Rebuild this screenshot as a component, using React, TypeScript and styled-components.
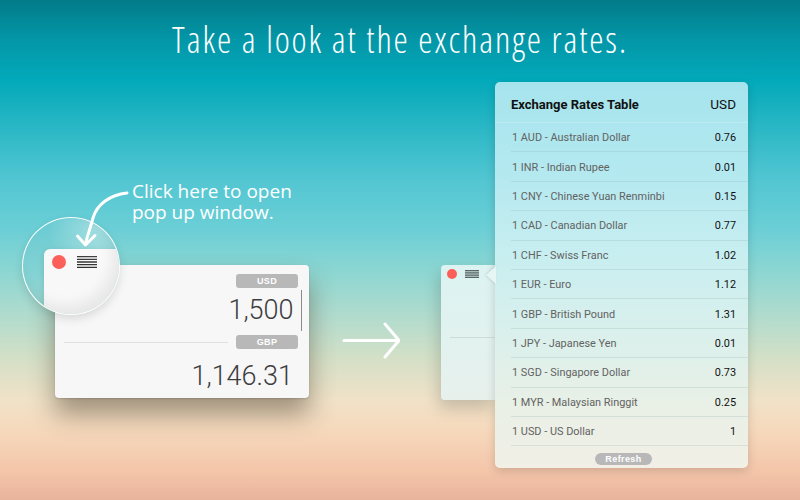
import React from "react";
import styled, { createGlobalStyle } from "styled-components";

const Global = createGlobalStyle`
  html, body { margin: 0; padding: 0; }
  body { width: 800px; height: 500px; overflow: hidden; font-family: Roboto, "Liberation Sans", sans-serif; }
  * { box-sizing: border-box; }
`;

const Page = styled.div`
  width: 800px;
  height: 500px;
  overflow: hidden;
  background: linear-gradient(
    180deg,
    #027b89 0px,
    #0397a8 40px,
    #02a9ba 80px,
    #2cb8c6 130px,
    #52c6d2 180px,
    #6ccfd6 230px,
    #8bd6d2 270px,
    #b4dccd 320px,
    #d5e0c6 360px,
    #f0e2c8 400px,
    #f6d9bc 430px,
    #f4c6aa 470px,
    #e9b49c 500px
  );
  display: flex;
  flex-direction: column;
`;

const Title = styled.h1`
  margin: 0;
  height: 82px;
  display: flex;
  align-items: center;
  justify-content: center;
  padding-bottom: 4px;
  font-family: "Open Sans", sans-serif;
  font-stretch: 75%;
  font-weight: 300;
  font-size: 36px;
  color: #ffffff;
  letter-spacing: 1.9px;
`;

const Stage = styled.div`
  display: flex;
  align-items: flex-start;
  height: 418px;
`;

const LeftArea = styled.div`
  position: relative;
  width: 309px;
  padding-left: 55px;
  display: flex;
  flex-direction: column;
`;

const Callout = styled.div`
  margin: 99px 0 0 77px;
  font-family: "Open Sans", sans-serif;
  font-weight: 400;
  font-size: 19px;
  line-height: 21px;
  color: #ffffff;
  white-space: nowrap;
`;

const CalloutLine = styled.span`
  display: block;
  height: 21px;
`;

const CurveArrow = styled.svg`
  position: absolute;
  left: 60px;
  top: 100px;
  overflow: visible;
  z-index: 2;
`;

const Window = styled.div`
  position: relative;
  margin-top: 42px;
  width: 254px;
  height: 133px;
  background: #f7f7f7;
  border-radius: 4px;
  box-shadow: 0 16px 26px rgba(60, 44, 28, 0.45), 0 1px 2px rgba(0, 0, 0, 0.15);
  display: flex;
  flex-direction: column;
`;

const PillRow = styled.div`
  display: flex;
  justify-content: flex-end;
  padding: 9px 11px 0 0;
`;

const Pill = styled.span<{ $w: number; $h: number; $round?: boolean }>`
  display: inline-flex;
  align-items: center;
  justify-content: center;
  width: ${(p) => p.$w}px;
  height: ${(p) => p.$h}px;
  border-radius: ${(p) => (p.$round ? p.$h / 2 : 3)}px;
  background: #b8b8b8;
  color: #ffffff;
  font-family: "Liberation Sans", Arial, sans-serif;
  font-weight: 700;
  font-size: 9px;
  letter-spacing: 0.4px;
`;

const AmountRow = styled.div`
  display: flex;
  justify-content: flex-end;
  align-items: center;
  height: 44px;
  padding-right: 7px;
`;

const BigNumber = styled.span`
  font-family: Roboto, sans-serif;
  font-weight: 300;
  font-size: 27px;
  line-height: 1;
  color: #3d3d3d;
`;

const Caret = styled.span`
  width: 1.5px;
  height: 41px;
  background: #8a8a8a;
  margin-left: 7px;
  margin-top: 1px;
`;

const DividerRow = styled.div`
  display: flex;
  align-items: center;
  padding: 3px 11px 0 9px;
  gap: 8px;
`;

const Rule = styled.span`
  flex: 1;
  height: 1px;
  background: #e0e0e0;
`;

const ResultRow = styled.div`
  display: flex;
  justify-content: flex-end;
  padding: 14px 16px 0 0;
`;

const Magnifier = styled.div`
  position: absolute;
  left: -33px;
  top: -48px;
  width: 98px;
  height: 98px;
  border-radius: 50%;
  overflow: hidden;
  border: 1.5px solid rgba(255, 255, 255, 0.95);
  background: linear-gradient(170deg, #66cad3 0%, #86d3d3 55%, #a9d9cf 100%);
  box-shadow: 0 4px 10px rgba(0, 0, 0, 0.12);
  &::after {
    content: "";
    position: absolute;
    inset: 0;
    border-radius: 50%;
    background: radial-gradient(circle at 80% 10%, rgba(255, 255, 255, 0.35), rgba(255, 255, 255, 0) 45%);
    box-shadow: inset -6px -8px 14px rgba(0, 0, 0, 0.07);
  }
`;

const ZoomWindow = styled.div`
  position: absolute;
  left: 20.5px;
  top: 30.5px;
  width: 200px;
  height: 200px;
  background: #f8f8f8;
  border-radius: 6px;
  box-shadow: 0 2px 6px rgba(0, 0, 0, 0.12);
  padding: 6px 8px;
`;

const ToolRow = styled.div<{ $gap: number }>`
  display: flex;
  align-items: center;
  gap: ${(p) => p.$gap}px;
`;

const Dot = styled.span<{ $d: number }>`
  width: ${(p) => p.$d}px;
  height: ${(p) => p.$d}px;
  border-radius: 50%;
  background: #fc5f5a;
  flex: none;
`;

const Arrow = styled.svg`
  margin: 240px 0 0 33px;
  flex: none;
`;

const SmallWindow = styled.div`
  margin: 183px 0 0 41px;
  width: 54px;
  height: 135px;
  border-radius: 4px 0 0 4px;
  background: linear-gradient(180deg, #dcf3f2 0%, #e2f2ef 60%, #e8f0ec 100%);
  box-shadow: -2px 8px 16px rgba(0, 0, 0, 0.18);
  display: flex;
  flex-direction: column;
  padding: 4px 0 0 6px;
  flex: none;
`;

const SmallRule = styled.span`
  margin: 58px 0 0 3px;
  height: 1px;
  background: #cddcda;
`;

const Popup = styled.div`
  position: relative;
  width: 253px;
  height: 386px;
  flex: none;
  border-radius: 5px;
  background: linear-gradient(
    180deg,
    #a6e4ed 0%,
    #b5e9f0 25%,
    #c8eef0 45%,
    #daf0ec 65%,
    #eaf0e6 85%,
    #f1efe6 100%
  );
  box-shadow: 0 3px 10px rgba(0, 0, 0, 0.16);
  display: flex;
  flex-direction: column;
  &::before {
    content: "";
    position: absolute;
    left: -9px;
    top: 184px;
    width: 0;
    height: 0;
    border-top: 9px solid transparent;
    border-bottom: 9px solid transparent;
    border-right: 10px solid #e6f6f5;
    filter: drop-shadow(-1px 0 1px rgba(0, 0, 0, 0.12));
  }
`;

const Header = styled.div`
  display: flex;
  align-items: center;
  justify-content: space-between;
  height: 41px;
  padding: 4px 12px 0 16px;
  border-bottom: 1px solid rgba(190, 235, 240, 0.9);
  font-family: Roboto, "Liberation Sans", sans-serif;
  color: #111;
`;

const HeaderTitle = styled.span`
  font-weight: 700;
  font-size: 13px;
`;

const HeaderUnit = styled.span`
  font-size: 13.5px;
`;

const Rows = styled.div`
  display: flex;
  flex-direction: column;
  padding-left: 16px;
`;

const Row = styled.div`
  display: flex;
  align-items: center;
  justify-content: space-between;
  height: 29.4px;
  padding: 1px 12px 0 1px;
  border-bottom: 1px solid rgba(130, 170, 175, 0.22);
  font-family: Roboto, "Liberation Sans", sans-serif;
  font-size: 10.9px;
`;

const RowName = styled.span`
  color: #626262;
`;

const RowValue = styled.span`
  color: #111;
`;

const Footer = styled.div`
  display: flex;
  justify-content: center;
  padding: 7px 0 0 4px;
`;

const Hamburger = ({ w, h, n, color, sw }: { w: number; h: number; n: number; color: string; sw: number }) => {
  const step = (h - sw) / (n - 1);
  return (
    <svg width={w} height={h} viewBox={`0 0 ${w} ${h}`}>
      {Array.from({ length: n }).map((_, i) => (
        <line key={i} x1={0} x2={w} y1={sw / 2 + i * step} y2={sw / 2 + i * step} stroke={color} strokeWidth={sw} />
      ))}
    </svg>
  );
};

const rates: [string, string][] = [
  ["1 AUD - Australian Dollar", "0.76"],
  ["1 INR - Indian Rupee", "0.01"],
  ["1 CNY - Chinese Yuan Renminbi", "0.15"],
  ["1 CAD - Canadian Dollar", "0.77"],
  ["1 CHF - Swiss Franc", "1.02"],
  ["1 EUR - Euro", "1.12"],
  ["1 GBP - British Pound", "1.31"],
  ["1 JPY - Japanese Yen", "0.01"],
  ["1 SGD - Singapore Dollar", "0.73"],
  ["1 MYR - Malaysian Ringgit", "0.25"],
  ["1 USD - US Dollar", "1"],
];

export default function App() {
  return (
    <>
      <Global />
      <Page>
        <Title>Take a look at the exchange rates.</Title>
        <Stage>
          <LeftArea>
            <Callout>
              <CalloutLine>Click here to open</CalloutLine>
              <CalloutLine>pop up window.</CalloutLine>
            </Callout>
            <CurveArrow width={69} height={70} viewBox="60 182 69 70">
              <path
                d="M127 193 C 110 195, 97 204, 93 218 C 90 229, 87 237, 85.5 244"
                fill="none"
                stroke="#fff"
                strokeWidth={3}
                strokeLinecap="round"
              />
              <path d="M77.5 236 L85.5 245 L95 235.5" fill="none" stroke="#fff" strokeWidth={3} strokeLinecap="round" strokeLinejoin="round" />
            </CurveArrow>
            <Window>
              <Magnifier>
                <ZoomWindow>
                  <ToolRow $gap={11}>
                    <Dot $d={14} />
                    <Hamburger w={20} h={12} n={5} color="#222" sw={1.3} />
                  </ToolRow>
                </ZoomWindow>
              </Magnifier>
              <PillRow>
                <Pill $w={62} $h={14}>USD</Pill>
              </PillRow>
              <AmountRow>
                <BigNumber>1,500</BigNumber>
                <Caret />
              </AmountRow>
              <DividerRow>
                <Rule />
                <Pill $w={62} $h={14}>GBP</Pill>
              </DividerRow>
              <ResultRow>
                <BigNumber>1,146.31</BigNumber>
              </ResultRow>
            </Window>
          </LeftArea>
          <Arrow width={58} height={38} viewBox="341 321 58 38">
            <path d="M343 339.5 L397 339.5" stroke="#fff" strokeWidth={3} strokeLinecap="round" fill="none" />
            <path d="M384 323 L398 339.5 L384 356" stroke="#fff" strokeWidth={3} strokeLinecap="round" strokeLinejoin="round" fill="none" />
          </Arrow>
          <SmallWindow>
            <ToolRow $gap={8}>
              <Dot $d={10} />
              <Hamburger w={14} h={8} n={4} color="#5a6665" sw={1.4} />
            </ToolRow>
            <SmallRule />
          </SmallWindow>
          <Popup>
            <Header>
              <HeaderTitle>Exchange Rates Table</HeaderTitle>
              <HeaderUnit>USD</HeaderUnit>
            </Header>
            <Rows>
              {rates.map(([name, value]) => (
                <Row key={name}>
                  <RowName>{name}</RowName>
                  <RowValue>{value}</RowValue>
                </Row>
              ))}
            </Rows>
            <Footer>
              <Pill $w={57} $h={12} $round>
                Refresh
              </Pill>
            </Footer>
          </Popup>
        </Stage>
      </Page>
    </>
  );
}
